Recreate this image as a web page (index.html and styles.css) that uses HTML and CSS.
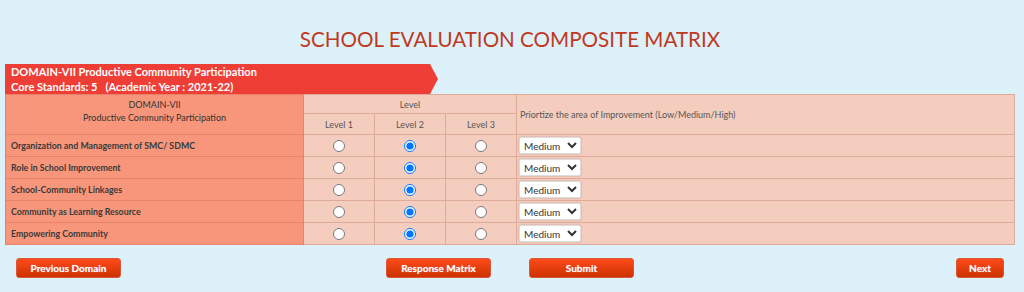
FILE: index.html
```html
<!DOCTYPE html>
<html>
<head>
<meta charset="utf-8">
<link rel="stylesheet" href="styles.css">
</head>
<body>
<div class="page">
  <h1 class="title">SCHOOL EVALUATION COMPOSITE MATRIX</h1>
  <div class="banner">
    <div>DOMAIN-VII Productive Community Participation</div>
    <div>Core Standards: 5 &nbsp;&nbsp;(Academic Year : 2021-22)</div>
  </div>
  <table class="matrix">
    <colgroup>
      <col class="c-name"><col class="c-lvl"><col class="c-lvl"><col class="c-lvl"><col class="c-pri">
    </colgroup>
    <thead>
      <tr class="h1">
        <th rowspan="2" class="domain">DOMAIN-VII<br>Productive Community Participation</th>
        <th colspan="3" class="lvl-head">Level</th>
        <th rowspan="2" class="pri-head">Priortize the area of Improvement (Low/Medium/High)</th>
      </tr>
      <tr class="h2">
        <th class="lvl-head">Level 1</th>
        <th class="lvl-head">Level 2</th>
        <th class="lvl-head">Level 3</th>
      </tr>
    </thead>
    <tbody>
      <tr>
        <td class="name">Organization and Management of SMC/ SDMC</td>
        <td class="radio"><input type="radio" name="r1"></td>
        <td class="radio"><input type="radio" name="r1" checked></td>
        <td class="radio"><input type="radio" name="r1"></td>
        <td class="pri"><select><option>Low</option><option selected>Medium</option><option>High</option></select></td>
      </tr>
      <tr>
        <td class="name">Role in School Improvement</td>
        <td class="radio"><input type="radio" name="r2"></td>
        <td class="radio"><input type="radio" name="r2" checked></td>
        <td class="radio"><input type="radio" name="r2"></td>
        <td class="pri"><select><option>Low</option><option selected>Medium</option><option>High</option></select></td>
      </tr>
      <tr>
        <td class="name">School-Community Linkages</td>
        <td class="radio"><input type="radio" name="r3"></td>
        <td class="radio"><input type="radio" name="r3" checked></td>
        <td class="radio"><input type="radio" name="r3"></td>
        <td class="pri"><select><option>Low</option><option selected>Medium</option><option>High</option></select></td>
      </tr>
      <tr>
        <td class="name">Community as Learning Resource</td>
        <td class="radio"><input type="radio" name="r4"></td>
        <td class="radio"><input type="radio" name="r4" checked></td>
        <td class="radio"><input type="radio" name="r4"></td>
        <td class="pri"><select><option>Low</option><option selected>Medium</option><option>High</option></select></td>
      </tr>
      <tr>
        <td class="name">Empowering Community</td>
        <td class="radio"><input type="radio" name="r5"></td>
        <td class="radio"><input type="radio" name="r5" checked></td>
        <td class="radio"><input type="radio" name="r5"></td>
        <td class="pri"><select><option>Low</option><option selected>Medium</option><option>High</option></select></td>
      </tr>
    </tbody>
  </table>
  <div class="actions">
    <div class="left"><button class="btn w105">Previous Domain</button></div>
    <div class="center"><button class="btn w105">Response Matrix</button><button class="btn w105">Submit</button></div>
    <div class="right"><button class="btn w48">Next</button></div>
  </div>
</div>
</body>
</html>
```
FILE: styles.css
```css
html, body {
  margin: 0;
  padding: 0;
  background: #dcf1fa;
  font-family: Lato, "Open Sans", sans-serif;
}
.page {
  width: 1010px;
  margin-left: 5px;
  padding-top: 26px;
}
.title {
  margin: 0;
  font-size: 20.6px;
  line-height: 26px;
  font-weight: normal;
  color: #c0391f;
  text-align: center;
}
.banner {
  margin-top: 12px;
  width: 433px;
  height: 30px;
  box-sizing: border-box;
  padding: 1px 0 0 6px;
  background: #ef3e36;
  color: #fff;
  font-weight: bold;
  font-size: 11px;
  line-height: 14.5px;
  clip-path: polygon(0 0, 425px 0, 433px 50%, 425px 100%, 0 100%);
}
.matrix {
  width: 1010px;
  border-collapse: collapse;
  table-layout: fixed;
  border: 1px solid #e6b5a5;
  font-size: 9px;
  color: #444;
}
.c-name { width: 298px; }
.c-lvl { width: 71px; }
.matrix th, .matrix td {
  border: 1px solid #deab9a;
  padding: 0;
  background: #f5cdbf;
}
.matrix th { font-weight: normal; }
.domain {
  background: #f7967a !important;
  border-color: #e88369 !important;
  vertical-align: top;
  padding-top: 3px !important;
  line-height: 13px;
  color: #333;
}
.h1 { height: 19px; }
.h2 { height: 21px; }
.lvl-head { text-align: center; color: #555; }
.pri-head {
  text-align: left;
  padding-left: 3px !important;
  color: #555;
}
tbody tr { height: 22px; }
.name {
  background: #f7967a !important;
  border-color: #e88369 !important;
  padding-left: 5px !important;
  font-weight: bold;
  font-size: 8.8px;
  color: #3a3a3a;
}
.radio { text-align: center; }
.radio input {
  margin: 0;
  width: 12px;
  height: 12px;
  vertical-align: middle;
}
.pri { padding-left: 2px !important; }
.pri select {
  width: 62px;
  height: 17px;
  font-size: 10px;
  font-family: Lato, sans-serif;
  color: #333;
  background: #fff;
  border: 1px solid #ddd;
  border-radius: 2px;
  box-shadow: 0 0 2px rgba(0,0,0,0.25);
  vertical-align: middle;
}
.actions {
  display: grid;
  grid-template-columns: 1fr auto 1fr;
  padding: 13px 11px 0;
}
.left { display: flex; }
.center { display: flex; gap: 38px; }
.right { display: flex; justify-content: flex-end; }
.btn {
  height: 20px;
  box-sizing: border-box;
  border: 1px solid #d9583a;
  border-radius: 3px;
  background: linear-gradient(#ff4a1a, #cc3200);
  color: #fff;
  font-family: Lato, sans-serif;
  font-weight: bold;
  font-size: 10px;
  padding: 0;
  text-shadow: 0 0 1px #f8a0b0;
}
.w105 { width: 105px; }
.w48 { width: 48px; }
```
